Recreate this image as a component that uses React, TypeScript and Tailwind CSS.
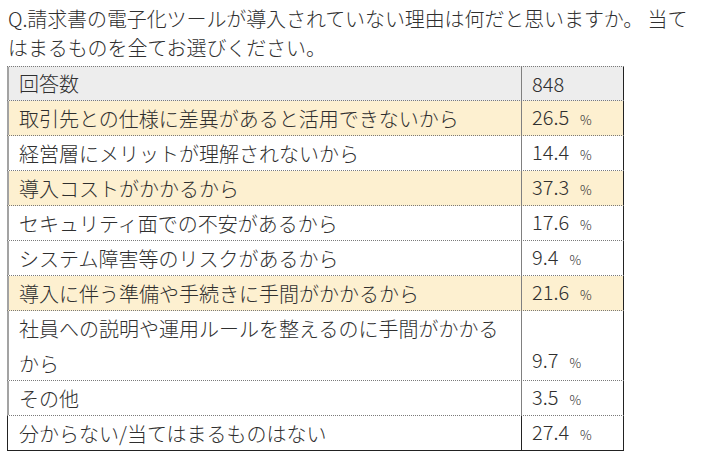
import React from 'react';

type Row = { label: React.ReactNode; value: string; hl?: boolean; tall?: boolean };

const rows: Row[] = [
  { label: '取引先との仕様に差異があると活用できないから', value: '26.5', hl: true },
  { label: '経営層にメリットが理解されないから', value: '14.4' },
  { label: '導入コストがかかるから', value: '37.3', hl: true },
  { label: 'セキュリティ面での不安があるから', value: '17.6' },
  { label: 'システム障害等のリスクがあるから', value: '9.4' },
  { label: '導入に伴う準備や手続きに手間がかかるから', value: '21.6', hl: true },
  {
    label: (
      <>
        社員への説明や運用ルールを整えるのに手間がかかる
        <br />
        から
      </>
    ),
    value: '9.7',
    tall: true,
  },
  { label: 'その他', value: '3.5' },
];

function Percent({ value }: { value: string }) {
  return (
    <span className="flex items-baseline">
      <span>{value}</span>
      <span className="ml-[11px] text-[13px]">%</span>
    </span>
  );
}

export default function App() {
  return (
    <div
      className="min-h-[461px] w-[710px] overflow-hidden bg-white font-light text-[#2f2f2f]"
      style={{ fontFamily: '"Noto Sans CJK JP", "Noto Sans", sans-serif' }}
    >
      {/* 設問 */}
      <div className="whitespace-nowrap pl-[8px] pt-[4px] text-[20px] leading-[29px] tracking-[-0.1px]">
        Q.請求書の電子化ツールが導入されていない理由は何だと思いますか。 当て
        <br />
        はまるものを全てお選びください。
      </div>

      <div className="ml-[7px] mt-[4px] w-[617px] text-[20px]">
        {/* ヘッダー */}
        <div className="flex h-[35px] border-y border-dotted border-y-[#7a7a7a] bg-[#ededed]">
          <div className="flex w-[514px] items-center border-l-2 border-l-[#a3a3a3] pl-[10px] leading-[35px]">
            回答数
          </div>
          <div className="flex flex-1 items-center border-x border-l-[#808080] border-r-[#222] pl-[10px] leading-[35px]">
            848
          </div>
        </div>

        {rows.map((r, i) => (
          <div
            key={i}
            className={`flex border-b border-dotted border-b-[#7a7a7a] ${r.tall ? 'h-[70px]' : 'h-[35px]'} ${
              r.hl ? 'bg-[#fdf0d0]' : 'bg-white'
            }`}
          >
            <div
              className={`w-[514px] border-l-2 border-l-[#a3a3a3] pl-[10px] leading-[35px] ${
                r.tall ? '' : 'flex items-center'
              }`}
            >
              {r.label}
            </div>
            <div
              className={`flex flex-1 border-x border-l-[#808080] border-r-[#222] pl-[10px] leading-[35px] ${
                r.tall ? 'items-end' : 'items-center'
              }`}
            >
              <Percent value={r.value} />
            </div>
          </div>
        ))}

        {/* 最終行 */}
        <div className="flex h-[35px] border-b border-b-[#222]">
          <div className="flex w-[514px] items-center border-l border-l-[#222] pl-[11px] leading-[35px]">
            分からない/当てはまるものはない
          </div>
          <div className="flex flex-1 items-center border-x border-x-[#222] pl-[10px] leading-[35px]">
            <Percent value="27.4" />
          </div>
        </div>
      </div>
    </div>
  );
}
